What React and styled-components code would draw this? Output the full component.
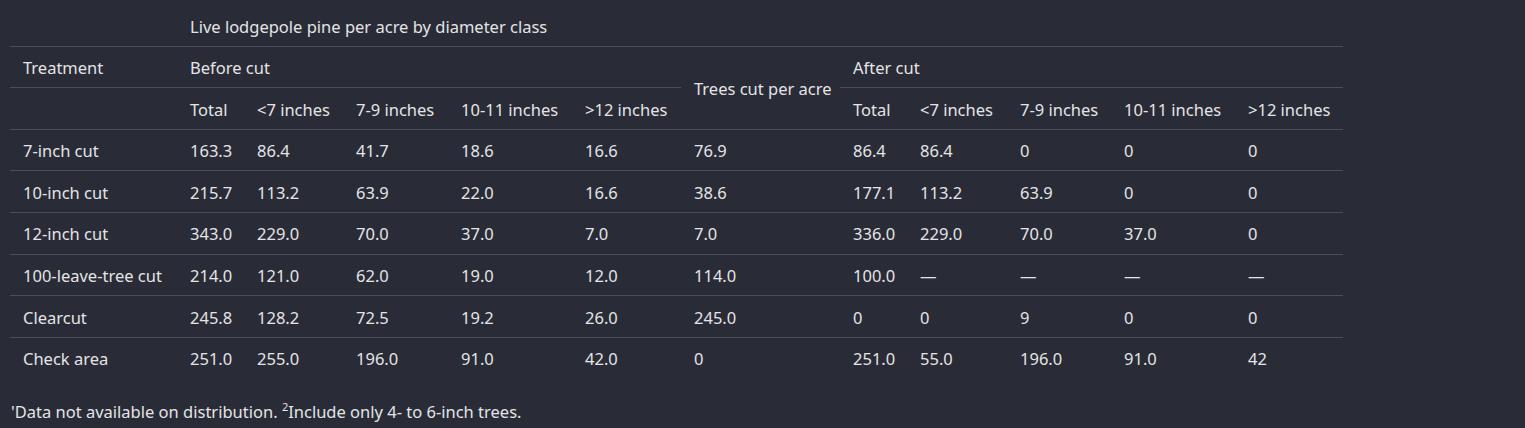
import styled, { createGlobalStyle } from 'styled-components';

const GlobalStyle = createGlobalStyle`
  body {
    margin: 0;
    background: #292b36;
    color: #e4e4e6;
    font-family: "Noto Sans", "Open Sans", sans-serif;
  }
`;

const Page = styled.div`
  padding: 5px 0 0 10px;
  width: 1333px;
`;

const Table = styled.table`
  border-collapse: collapse;
  table-layout: fixed;
  width: 1333px;
  font-size: 16.5px;
`;

const Cell = styled.td`
  padding: 9.5px 0 6.5px 13px;
  line-height: 24.6px;
  text-align: left;
  font-weight: 400;
  vertical-align: middle;
  white-space: nowrap;
  border-bottom: ${(props) => (props.$last ? 'none' : '1px solid #4b4d57')};
`;

const HeadCell = styled(Cell).attrs({ as: 'th' })``;

const Footnote = styled.p`
  margin: 22px 0 0 1px;
  font-size: 16.5px;
  line-height: 24px;
`;

const Sup = styled.sup`
  font-size: 11px;
  vertical-align: 7px;
  line-height: 0;
`;

const widths = [167, 67, 99, 105, 124, 109, 159, 67, 100, 104, 124, 108];
const sizes = ['Total', '<7 inches', '7-9 inches', '10-11 inches', '>12 inches'];

const rows = [
  ['7-inch cut', '163.3', '86.4', '41.7', '18.6', '16.6', '76.9', '86.4', '86.4', '0', '0', '0'],
  ['10-inch cut', '215.7', '113.2', '63.9', '22.0', '16.6', '38.6', '177.1', '113.2', '63.9', '0', '0'],
  ['12-inch cut', '343.0', '229.0', '70.0', '37.0', '7.0', '7.0', '336.0', '229.0', '70.0', '37.0', '0'],
  ['100-leave-tree cut', '214.0', '121.0', '62.0', '19.0', '12.0', '114.0', '100.0', '—', '—', '—', '—'],
  ['Clearcut', '245.8', '128.2', '72.5', '19.2', '26.0', '245.0', '0', '0', '9', '0', '0'],
  ['Check area', '251.0', '255.0', '196.0', '91.0', '42.0', '0', '251.0', '55.0', '196.0', '91.0', '42'],
];

export default function App() {
  return (
    <Page>
      <GlobalStyle />
      <Table>
        <colgroup>
          {widths.map((w, i) => (
            <col key={i} style={{ width: w }} />
          ))}
        </colgroup>
        <thead>
          <tr>
            <HeadCell />
            <HeadCell colSpan={11}>Live lodgepole pine per acre by diameter class</HeadCell>
          </tr>
          <tr>
            <HeadCell>Treatment</HeadCell>
            <HeadCell colSpan={5}>Before cut</HeadCell>
            <HeadCell rowSpan={2}>Trees cut per acre</HeadCell>
            <HeadCell colSpan={5}>After cut</HeadCell>
          </tr>
          <tr>
            <HeadCell />
            {sizes.map((s) => (
              <HeadCell key={'b' + s}>{s}</HeadCell>
            ))}
            {sizes.map((s) => (
              <HeadCell key={'a' + s}>{s}</HeadCell>
            ))}
          </tr>
        </thead>
        <tbody>
          {rows.map((row, r) => (
            <tr key={row[0]}>
              {row.map((v, c) => (
                <Cell key={c} $last={r === rows.length - 1}>
                  {v}
                </Cell>
              ))}
            </tr>
          ))}
        </tbody>
      </Table>
      <Footnote>
        'Data not available on distribution. <Sup>2</Sup>Include only 4- to 6-inch trees.
      </Footnote>
    </Page>
  );
}
